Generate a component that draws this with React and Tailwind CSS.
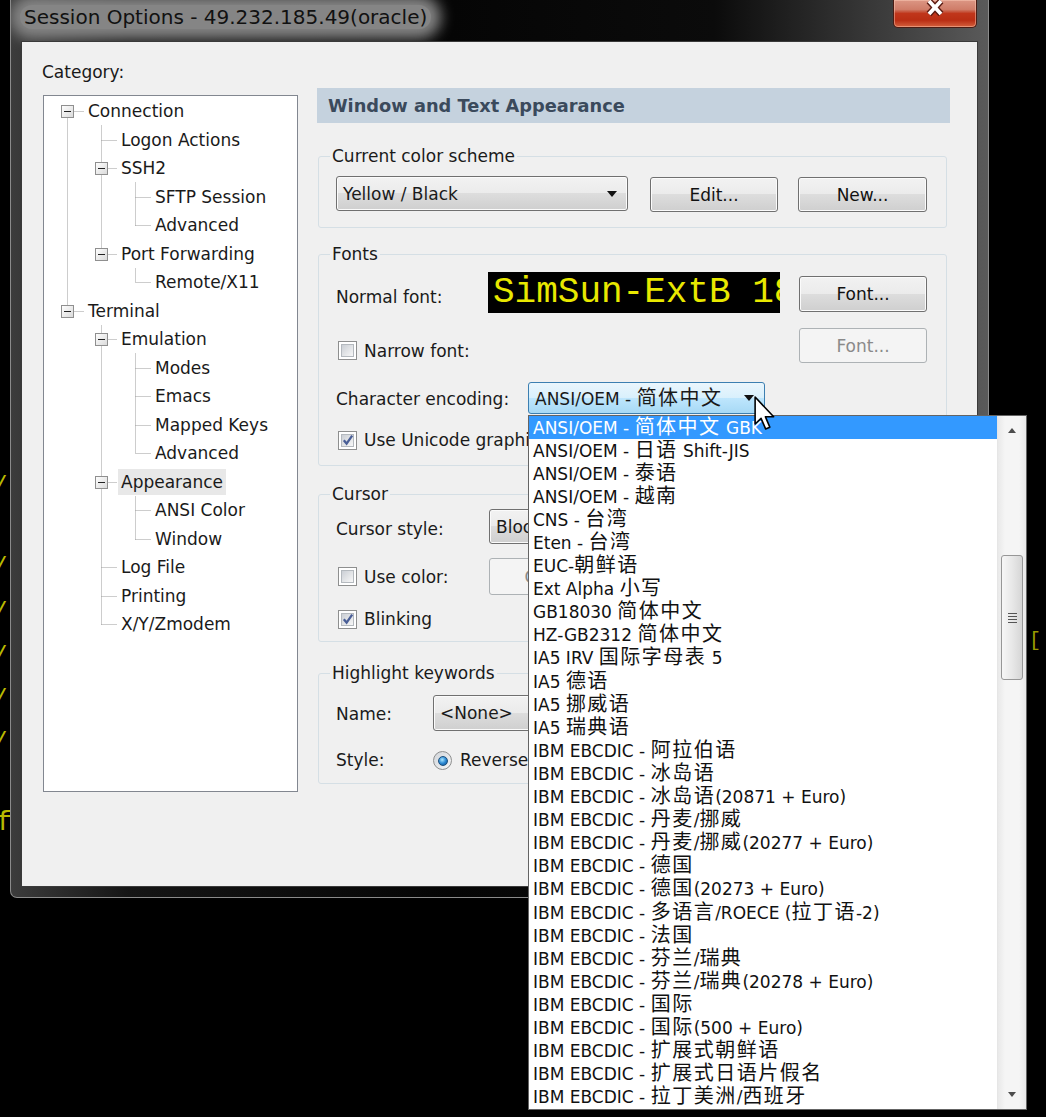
import React from "react";

const CJK = /([\u3000-\u9fff\uff00-\uffef]+)/;

function Mixed({ text }) {
  return text.split(CJK).map((p, i) =>
    CJK.test(p) ? (
      <span key={i} className="text-[20px] tracking-[1.5px]">
        {p}
      </span>
    ) : (
      <React.Fragment key={i}>{p}</React.Fragment>
    )
  );
}

const Arrow = () => (
  <svg width="10" height="6" viewBox="0 0 10 6" className="shrink-0">
    <path d="M0 0h10L5 6z" fill="#111" />
  </svg>
);

function Btn({ children, disabled, className = "" }) {
  const look = disabled
    ? "border-[#adb2b5] bg-[#f4f4f4] text-[#8a8a8a]"
    : "border-[#707070] bg-[linear-gradient(180deg,#f2f2f2_0%,#ebebeb_49%,#dddddd_50%,#cfcfcf_100%)] text-[#111] shadow-[inset_0_0_0_1px_#fbfbfb]";
  return (
    <div className={`flex shrink-0 items-center justify-center rounded-[3px] border ${look} ${className}`}>
      {children}
    </div>
  );
}

function Combo({ children, hot, className = "" }) {
  const look = hot
    ? "border-[#3c7fb1] bg-[linear-gradient(180deg,#eaf6fd_0%,#d9f0fc_49%,#bee6fd_50%,#a7d9f5_100%)]"
    : "border-[#707070] bg-[linear-gradient(180deg,#f2f2f2_0%,#ebebeb_49%,#dddddd_50%,#cfcfcf_100%)] shadow-[inset_0_0_0_1px_#fbfbfb]";
  return (
    <div className={`flex shrink-0 items-center justify-between overflow-hidden rounded-[3px] border pl-[6px] pr-[10px] ${look} ${className}`}>
      <span className="whitespace-nowrap">{children}</span>
      <Arrow />
    </div>
  );
}

function Check({ checked, className = "" }) {
  return (
    <div className={`flex h-[19px] w-[19px] shrink-0 items-center justify-center border border-[#8e8f8f] bg-white ${className}`}>
      <div className="relative h-[13px] w-[13px] border border-[#b4b9be] bg-[linear-gradient(135deg,#cbcfd5,#f7f7f7)]">
        {checked && (
          <svg className="absolute -left-[1px] -top-[2px]" width="14" height="14" viewBox="0 0 14 14">
            <path d="M2.8 7.2 L5.6 10.6 L11.2 2.6" fill="none" stroke="#4a5f97" strokeWidth="2.3" />
          </svg>
        )}
      </div>
    </div>
  );
}

function Radio({ className = "" }) {
  return (
    <div className={`flex h-[19px] w-[19px] shrink-0 items-center justify-center rounded-full border border-[#8e8f8f] bg-[linear-gradient(135deg,#d0d4d9,#f7f7f7)] ${className}`}>
      <div className="h-[10px] w-[10px] rounded-full border border-[#1b4f7d] bg-[radial-gradient(circle_at_40%_35%,#a8e6ff_0%,#2d8ad4_50%,#0f4f8c_100%)]" />
    </div>
  );
}

const tree = [
  ["Connection", 0, true],
  ["Logon Actions", 1],
  ["SSH2", 1, true],
  ["SFTP Session", 2],
  ["Advanced", 2],
  ["Port Forwarding", 1, true],
  ["Remote/X11", 2],
  ["Terminal", 0, true],
  ["Emulation", 1, true],
  ["Modes", 2],
  ["Emacs", 2],
  ["Mapped Keys", 2],
  ["Advanced", 2],
  ["Appearance", 1, true, true],
  ["ANSI Color", 2],
  ["Window", 2],
  ["Log File", 1],
  ["Printing", 1],
  ["X/Y/Zmodem", 1],
];

const PL = ["pl-[44px]", "pl-[77px]", "pl-[111px]"];

function TreeLines() {
  const cy = (i) => Math.round(15 + 28.5 * i) + 0.5;
  const lx = [23.5, 57.5, 91.5];
  const tx = [44, 77, 111];
  const verts = [
    [lx[0], cy(0), cy(7)],
    [lx[1], cy(0) + 14, cy(5)],
    [lx[2], cy(2) + 14, cy(4)],
    [lx[2], cy(5) + 14, cy(6)],
    [lx[1], cy(7) + 14, cy(18)],
    [lx[2], cy(8) + 14, cy(12)],
    [lx[2], cy(13) + 14, cy(15)],
  ];
  return (
    <svg className="pointer-events-none absolute left-0 top-0" width="253" height="695">
      <defs>
        <linearGradient id="bx" x1="0" y1="0" x2="1" y2="1">
          <stop offset="0" stopColor="#ffffff" />
          <stop offset="1" stopColor="#d9d9d9" />
        </linearGradient>
      </defs>
      <g stroke="#9a9a9a" strokeWidth="1" strokeDasharray="1 1" fill="none">
        {verts.map(([x, a, b], i) => (
          <line key={i} x1={x} y1={a} x2={x} y2={b} />
        ))}
        {tree.map(([, L, box], i) => (
          <line key={"h" + i} x1={box ? lx[L] + 7 : lx[L]} y1={cy(i)} x2={tx[L] - 4} y2={cy(i)} />
        ))}
      </g>
      {tree.map(([, L, box], i) =>
        box ? (
          <g key={"b" + i}>
            <rect x={lx[L] - 6} y={cy(i) - 6} width="12" height="12" fill="url(#bx)" stroke="#8f8f8f" />
            <line x1={lx[L] - 3.5} y1={cy(i)} x2={lx[L] + 3.5} y2={cy(i)} stroke="#222" />
          </g>
        ) : null
      )}
    </svg>
  );
}

const encodings = [
  "ANSI/OEM - 简体中文 GBK",
  "ANSI/OEM - 日语 Shift-JIS",
  "ANSI/OEM - 泰语",
  "ANSI/OEM - 越南",
  "CNS - 台湾",
  "Eten - 台湾",
  "EUC-朝鲜语",
  "Ext Alpha 小写",
  "GB18030 简体中文",
  "HZ-GB2312 简体中文",
  "IA5 IRV 国际字母表 5",
  "IA5 德语",
  "IA5 挪威语",
  "IA5 瑞典语",
  "IBM EBCDIC - 阿拉伯语",
  "IBM EBCDIC - 冰岛语",
  "IBM EBCDIC - 冰岛语(20871 + Euro)",
  "IBM EBCDIC - 丹麦/挪威",
  "IBM EBCDIC - 丹麦/挪威(20277 + Euro)",
  "IBM EBCDIC - 德国",
  "IBM EBCDIC - 德国(20273 + Euro)",
  "IBM EBCDIC - 多语言/ROECE (拉丁语-2)",
  "IBM EBCDIC - 法国",
  "IBM EBCDIC - 芬兰/瑞典",
  "IBM EBCDIC - 芬兰/瑞典(20278 + Euro)",
  "IBM EBCDIC - 国际",
  "IBM EBCDIC - 国际(500 + Euro)",
  "IBM EBCDIC - 扩展式朝鲜语",
  "IBM EBCDIC - 扩展式日语片假名",
  "IBM EBCDIC - 拉丁美洲/西班牙",
];

const SmallTri = ({ up }) => (
  <svg width="8" height="5" viewBox="0 0 8 5">
    <path d={up ? "M0 5h8L4 0z" : "M0 0h8L4 5z"} fill="#4d4d4d" />
  </svg>
);

export default function App() {
  return (
    <div className="relative h-[1117px] w-[1046px] overflow-hidden bg-black font-['DejaVu_Sans','Noto_Sans_CJK_SC',sans-serif] text-[17px] leading-[20px] text-[#1a1a1a]">
      {/* terminal text peeking behind the window */}
      {[474, 555, 600, 644, 687, 730].map((t) => (
        <span key={t} className="absolute left-[-7px] font-['Liberation_Mono',monospace] text-[24px] leading-[26px] text-[#b9b900]" style={{ top: t }}>
          /
        </span>
      ))}
      <span className="absolute left-[-4px] top-[808px] font-['Liberation_Mono',monospace] text-[28px] leading-[30px] text-[#b9b900]">f</span>
      <span className="absolute left-[1029px] top-[630px] font-['Liberation_Mono',monospace] text-[20px] leading-[22px] text-[#9a9a00]">[</span>

      {/* window */}
      <div className="relative ml-[10px] flex h-[898px] w-[979px] flex-col overflow-hidden rounded-b-[7px] border-x border-b border-[#8b8b8b] bg-[linear-gradient(90deg,#3c3c3c_0%,#151515_12%,#050505_45%,#0b0b0b_72%,#5a5a5a_100%)]">
        <div className="flex h-[41px] shrink-0 justify-between">
          <div className="pl-[9px] pt-[5px]">
            <span className="inline-block whitespace-nowrap rounded-[14px] bg-[#858585] px-[4px] text-[20px] leading-[24px] text-[#111111] shadow-[0_0_14px_10px_#858585]">
              Session Options - 49.232.185.49(oracle)
            </span>
          </div>
          <div className="mr-[11px] flex h-[28px] w-[84px] items-start justify-center rounded-b-[5px] border-x border-b border-[#4a1c14] bg-[linear-gradient(180deg,#dc9684_0%,#cf7d69_35%,#c0361b_50%,#b92e14_75%,#d4603d_100%)] shadow-[inset_0_0_0_1px_rgba(255,210,190,0.45)]">
            <svg width="22" height="17" viewBox="0 0 22 17">
              <path d="M5 1 L17 14 M17 1 L5 14" stroke="#5a1a10" strokeWidth="6.5" />
              <path d="M5 1 L17 14 M17 1 L5 14" stroke="#ffffff" strokeWidth="3.8" />
            </svg>
          </div>
        </div>

        <div className="relative mx-[10px] flex h-[846px] shrink-0 border border-[#3a3a3a] bg-[#f0f0f0]">
          {/* left column */}
          <div className="ml-[21px] flex flex-col pt-[20px]">
            <div className="-ml-[1px] h-[20px]">Category:</div>
            <div className="relative mt-[13px] h-[697px] w-[255px] border border-[#828790] bg-white">
              <TreeLines />
              <div className="pt-[0.75px]">
                {tree.map(([label, lvl, , sel], i) => (
                  <div key={i} className={`flex h-[28.5px] items-center whitespace-nowrap ${PL[lvl]}`}>
                    <span className={sel ? "-ml-[3px] bg-[#e8e8e8] px-[3px] leading-[26px]" : ""}>{label}</span>
                  </div>
                ))}
              </div>
            </div>
          </div>

          {/* right column */}
          <div className="ml-[19px] w-[633px] pt-[46px]">
            <div className="flex h-[35px] items-center bg-[#c5d2de] pl-[11px] text-[17.8px] font-bold text-[#3b4a5c]">
              Window and Text Appearance
            </div>

            <fieldset className="ml-[1px] mr-[3px] mt-[23px] rounded-[3px] border border-[#d5dfe5]">
              <legend className="ml-[11px] px-[2px] leading-[20px]">Current color scheme</legend>
              <div className="flex pb-[15px] pl-[17px] pr-[19px] pt-[10px]">
                <Combo className="h-[35px] w-[292px]">Yellow / Black</Combo>
                <Btn className="ml-[22px] mt-[1px] h-[35px] w-[128px]">Edit...</Btn>
                <Btn className="ml-auto mt-[1px] h-[35px] w-[129px]">New...</Btn>
              </div>
            </fieldset>

            <fieldset className="ml-[1px] mr-[3px] mt-[16px] rounded-[3px] border border-[#d5dfe5]">
              <legend className="ml-[11px] px-[2px] leading-[20px]">Fonts</legend>
              <div className="flex flex-col pb-[15px] pl-[17px] pr-[19px] pt-[8px]">
                <div className="flex h-[41px] items-start">
                  <span className="mt-[15px] w-[152px] shrink-0">Normal font:</span>
                  <div className="h-[41px] w-[292px] shrink-0 overflow-hidden whitespace-nowrap bg-black pl-[5px] font-['Liberation_Mono',monospace] text-[36px] leading-[41px] text-[#e8e800]">
                    SimSun-ExtB 18
                  </div>
                  <Btn className="ml-auto mt-[4px] h-[36px] w-[128px]">Font...</Btn>
                </div>
                <div className="mt-[15px] flex h-[35px] items-start">
                  <Check className="ml-[2px] mt-[13px]" />
                  <span className="ml-[7px] mt-[13px]">Narrow font:</span>
                  <Btn disabled className="ml-auto h-[35px] w-[128px]">
                    Font...
                  </Btn>
                </div>
                <div className="mt-[19px] flex h-[32px] items-start">
                  <span className="mt-[7px] w-[192px] shrink-0">Character encoding:</span>
                  <Combo hot className="h-[32px] w-[237px]">
                    <Mixed text="ANSI/OEM - 简体中文" />
                  </Combo>
                </div>
                <div className="mt-[16px] flex h-[20px] items-center">
                  <Check checked className="ml-[2px]" />
                  <span className="ml-[7px] whitespace-nowrap">Use Unicode graphics characters</span>
                </div>
              </div>
            </fieldset>

            <fieldset className="ml-[1px] mr-[3px] mt-[18px] rounded-[3px] border border-[#d5dfe5]">
              <legend className="ml-[11px] px-[2px] leading-[20px]">Cursor</legend>
              <div className="flex flex-col pb-[12px] pl-[17px] pr-[19px] pt-[5px]">
                <div className="flex h-[35px] items-start">
                  <span className="mt-[10px] w-[153px] shrink-0">Cursor style:</span>
                  <Combo className="h-[35px] w-[291px]">Block</Combo>
                </div>
                <div className="mt-[14px] flex h-[37px] items-start">
                  <div className="flex w-[153px] shrink-0 items-start">
                    <Check className="ml-[2px] mt-[9px]" />
                    <span className="ml-[7px] mt-[9px]">Use color:</span>
                  </div>
                  <Btn disabled className="h-[37px] w-[130px]">
                    Color...
                  </Btn>
                </div>
                <div className="mt-[14px] flex h-[20px] items-center">
                  <Check checked className="ml-[2px]" />
                  <span className="ml-[7px]">Blinking</span>
                </div>
              </div>
            </fieldset>

            <fieldset className="ml-[1px] mr-[3px] mt-[21px] rounded-[3px] border border-[#d5dfe5]">
              <legend className="ml-[11px] px-[2px] leading-[20px]">Highlight keywords</legend>
              <div className="flex flex-col pb-[12px] pl-[17px] pr-[19px] pt-[12px]">
                <div className="flex h-[36px] items-start">
                  <span className="mt-[9px] w-[97px] shrink-0">Name:</span>
                  <Combo className="h-[36px] w-[300px]">{"<None>"}</Combo>
                </div>
                <div className="mt-[10px] flex h-[30px] items-start">
                  <span className="mt-[9px] w-[97px] shrink-0">Style:</span>
                  <Radio className="mt-[10px]" />
                  <span className="ml-[8px] mt-[9px]">Reverse video</span>
                </div>
              </div>
            </fieldset>
          </div>
        </div>
      </div>

      {/* open dropdown list */}
      <div className="absolute left-[528px] top-[415px] flex h-[695px] w-[499px] border border-[#646464] bg-white">
        <div className="flex-1">
          {encodings.map((e, i) => (
            <div
              key={i}
              className={`flex h-[23.1px] items-center whitespace-nowrap pl-[4px] leading-[23px] ${i === 0 ? "bg-[#3399ff] text-white" : "text-[#111]"}`}
            >
              <span>
                <Mixed text={e} />
              </span>
            </div>
          ))}
        </div>
        <div className="flex w-[29px] flex-col border-l border-[#e6e6e6] bg-[linear-gradient(90deg,#e9e9e9,#f5f5f5_25%,#f5f5f5_75%,#e9e9e9)]">
          <div className="flex h-[29px] items-center justify-center">
            <SmallTri up />
          </div>
          <div className="h-[110px]" />
          <div className="mx-[3px] flex h-[125px] flex-col items-center justify-center gap-[2px] rounded-[3px] border border-[#979797] bg-[linear-gradient(90deg,#f7f7f7,#e8e8e8_50%,#d6d6d6)]">
            <div className="h-[1px] w-[9px] bg-[#555]" />
            <div className="h-[1px] w-[9px] bg-[#555]" />
            <div className="h-[1px] w-[9px] bg-[#555]" />
            <div className="h-[1px] w-[9px] bg-[#555]" />
          </div>
          <div className="flex-1" />
          <div className="flex h-[29px] items-center justify-center">
            <SmallTri />
          </div>
        </div>
      </div>

      {/* mouse pointer */}
      <svg className="absolute left-[754px] top-[396px]" width="22" height="35" viewBox="0 0 12.5 20">
        <path d="M0.6 0.6 V16 L4 12.8 L6.6 18.8 L9 17.8 L6.5 11.9 H11.2 Z" fill="#ffffff" stroke="#000000" strokeWidth="0.9" strokeLinejoin="round" />
      </svg>
    </div>
  );
}
